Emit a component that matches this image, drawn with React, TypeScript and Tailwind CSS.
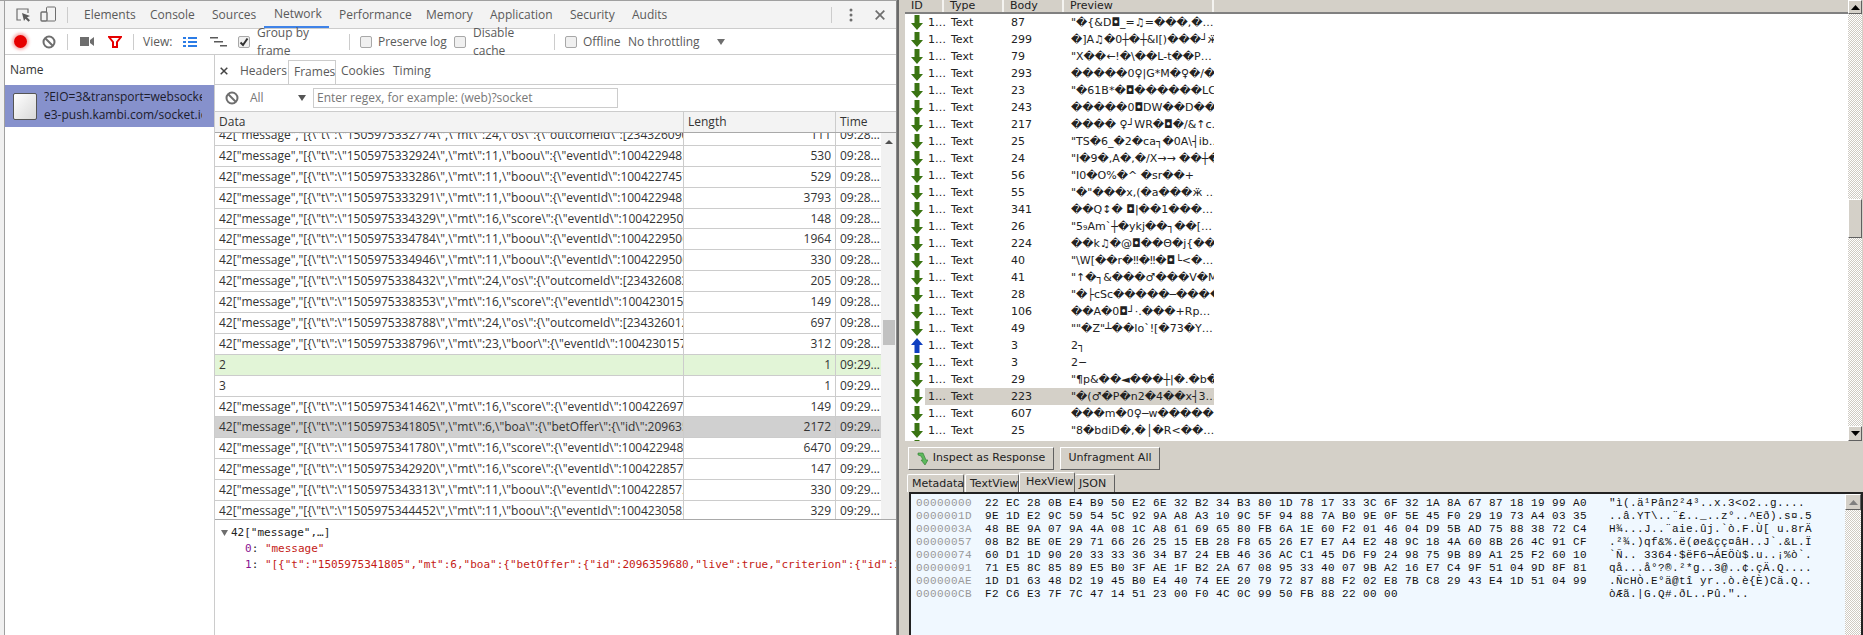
import React from "react";

const UI = "font-['Open_Sans','Noto_Sans',sans-serif]";
const WIN = "font-['DejaVu_Sans',sans-serif]";

const tabs = [
  { t: "Elements", c: "w-[66px]" },
  { t: "Console", c: "w-[62px]" },
  { t: "Sources", c: "w-[62px]" },
  { t: "Network", c: "w-[65px] border-b-2 border-[#3f83e8]" },
  { t: "Performance", c: "w-[87px]" },
  { t: "Memory", c: "w-[64px]" },
  { t: "Application", c: "w-[80px]" },
  { t: "Security", c: "w-[62px]" },
  { t: "Audits", c: "w-[50px]" },
];

const m = (ts: string, rest: string) => `42["message","[{\\"t\\":\\"15059753${ts}\\",\\"mt\\":${rest}`;
const boou = (id: string) => `11,\\"boou\\":{\\"eventId\\":${id},…`;
const score = (id: string) => `16,\\"score\\":{\\"eventId\\":${id},…`;
const os = (id: string) => `24,\\"os\\":{\\"outcomeId\\":[${id}…`;

const frames: { d: string; l: string; t: string; k?: "g" | "s" }[] = [
  { d: m("32774", os("234326090")), l: "111", t: "09:28…" },
  { d: m("32924", boou("1004229485")), l: "530", t: "09:28…" },
  { d: m("33286", boou("1004227457")), l: "529", t: "09:28…" },
  { d: m("33291", boou("1004229485")), l: "3793", t: "09:28…" },
  { d: m("34329", score("1004229506")), l: "148", t: "09:28…" },
  { d: m("34784", boou("1004229506")), l: "1964", t: "09:28…" },
  { d: m("34946", boou("1004229506")), l: "330", t: "09:28…" },
  { d: m("38432", os("234326083")), l: "205", t: "09:28…" },
  { d: m("38353", score("1004230157")), l: "149", t: "09:28…" },
  { d: m("38788", os("234326012")), l: "697", t: "09:28…" },
  { d: m("38796", `23,\\"boor\\":{\\"eventId\\":1004230157,\\…`), l: "312", t: "09:28…" },
  { d: "2", l: "1", t: "09:29…", k: "g" },
  { d: "3", l: "1", t: "09:29…" },
  { d: m("41462", score("1004226977")), l: "149", t: "09:29…" },
  { d: m("41805", `6,\\"boa\\":{\\"betOffer\\":{\\"id\\":209635…`), l: "2172", t: "09:29…", k: "s" },
  { d: m("41780", score("1004229485")), l: "6470", t: "09:29…" },
  { d: m("42920", score("1004228572")), l: "147", t: "09:29…" },
  { d: m("43313", boou("1004228572")), l: "330", t: "09:29…" },
  { d: m("44452", boou("1004230583")), l: "329", t: "09:29…" },
];

const list: [string, string, boolean?][] = [
  ["87", "\"�{&D◘_=♫=���,�…"],
  ["299", "�]A♫�0┼�┼&I[)���┘ӝ…"],
  ["79", "\"X��←!�\\��L-t��P…"],
  ["293", "�����0♀|G*M�♀�/�…"],
  ["23", "\"�61B*�◘������LC…"],
  ["243", "�����0◘DW��D���…"],
  ["217", "���� ♀┘WR�◘�/&↑c…"],
  ["25", "\"TS�6_�2�ca┐�0A\\┤ib…"],
  ["24", "\"I�9�,A�,�/X→→ ��┼�"],
  ["56", "\"I0�O%�^   �sr��+"],
  ["55", "\"�\"���x,(�a���ӝ …"],
  ["341", "��Q↕� ◘|��1���…"],
  ["26", "\"5₉Am`┼�ykj��┐��[…"],
  ["224", "��k♫�@◘��Θ�j{��┴…"],
  ["40", "\"\\W[��r�‼�‼�◘└<�…"],
  ["41", "\"↑�┐&���♂���V�M�‼…"],
  ["28", "\"�├cSc�����─����♫…"],
  ["106", "��A�0◘┘·.���+Rp…"],
  ["49", "\"\"�Z\"┴��Io`![�73�Y…"],
  ["3", "2┐", true],
  ["3", "2−"],
  ["29", "\"¶p&��◄���┼|�.�b�…"],
  ["223", "\"�(♂�P�n2�4��x┤3…"],
  ["607", "���m�0♀─w�����…"],
  ["25", "\"8�bdiD�,�│�R<��…"],
  ["31", ""],
];

const hex: [string, string, string][] = [
  ["00000000", "22 EC 28 0B E4 B9 50 E2 6E 32 B2 34 B3 80 1D 78 17 33 3C 6F 32 1A 8A 67 87 18 19 99 A0", "\"ì(.ä¹Pân2²4³..x.3<o2..g...."],
  ["0000001D", "9E 1D E2 9C 59 54 5C 92 9A A8 A3 10 9C 5F 94 88 7A B0 9E 0F 5E 45 F0 29 19 73 A4 03 35", "..â.YT\\..¨£.._..z°..^Eð).s¤.5"],
  ["0000003A", "48 BE 9A 07 9A 4A 08 1C A8 61 69 65 80 FB 6A 1E 60 F2 01 46 04 D9 5B AD 75 88 38 72 C4", "H¾...J..¨aie.ûj.`ò.F.Ù[ u.8rÄ"],
  ["00000057", "08 B2 BE 0E 29 71 66 26 25 15 EB 28 F8 65 26 E7 E7 A4 E2 48 9C 18 4A 60 8B 26 4C 91 CF", ".²¾.)qf&%.ë(øe&çç¤âH..J`.&L.Ï"],
  ["00000074", "60 D1 1D 90 20 33 33 36 34 B7 24 EB 46 36 AC C1 45 D6 F9 24 98 75 9B 89 A1 25 F2 60 10", "`Ñ.. 3364·$ëF6¬ÁEÖù$.u..¡%ò`."],
  ["00000091", "71 E5 8C 85 89 E5 B0 3F AE 1F B2 2A 67 08 95 33 40 07 9B A2 16 E7 C4 9F 51 04 9D 8F 81", "qå...å°?®.²*g..3@..¢.çÄ.Q...."],
  ["000000AE", "1D D1 63 48 D2 19 45 B0 E4 40 74 EE 20 79 72 87 88 F2 02 E8 7B C8 29 43 E4 1D 51 04 99", ".ÑcHÒ.E°ä@tî yr..ò.è{È)Cä.Q.."],
  ["000000CB", "F2 C6 E3 7F 7C 47 14 51 23 00 F0 4C 0C 99 50 FB 88 22 00 00", "òÆã.|G.Q#.ðL..Pû.\".."],
];

function Check({ on }: { on?: boolean }) {
  return (
    <span className="flex h-[12px] w-[12px] items-center justify-center rounded-[2px] border border-[#a8a8a8] bg-[#f0f0f0]">
      {on && (
        <svg width="10" height="10" viewBox="0 0 10 10">
          <path d="M1.5 5.5 4 8l4.5-6.5" fill="none" stroke="#333" strokeWidth="2" />
        </svg>
      )}
    </span>
  );
}

function Clear() {
  return (
    <svg width="14" height="14" viewBox="0 0 14 14">
      <circle cx="7" cy="7" r="5.5" fill="none" stroke="#6e6e6e" strokeWidth="2" />
      <path d="M3 3l8 8" stroke="#6e6e6e" strokeWidth="2" />
    </svg>
  );
}

function Arrow({ up }: { up?: boolean }) {
  return (
    <svg width="12" height="15" viewBox="0 0 12 15" className="shrink-0">
      {up ? (
        <path d="M6 0l6 7H8.5v8h-5V7H0z" fill="#0f3fc0" />
      ) : (
        <path d="M3.5 0h5v8H12l-6 7-6-7h3.5z" fill="#3a7412" />
      )}
    </svg>
  );
}

function Tri({ up }: { up?: boolean }) {
  return (
    <svg width="9" height="5" viewBox="0 0 9 5">
      <path d={up ? "M4.5 0 9 5H0z" : "M0 0h9L4.5 5z"} fill="#000" />
    </svg>
  );
}

function Bevel({ children, className }: { children?: React.ReactNode; className: string }) {
  return (
    <div className={`flex items-center justify-center border-t border-l border-t-white border-l-white border-r border-b border-r-[#606060] border-b-[#606060] bg-[#d4d0c8] ${className}`}>
      {children}
    </div>
  );
}

const checker = "bg-[repeating-conic-gradient(#cfcbc3_0_25%,#ffffff_0_50%)] bg-[length:2px_2px]";

function DevTools() {
  return (
    <div className={`flex h-full w-[892px] shrink-0 flex-col border-r border-[#8a8a8a] bg-white text-[12px] text-[#5a5a5a] ${UI}`}>
      <div className="flex h-[27px] shrink-0 items-center bg-[#f3f3f3]">
        <div className="flex w-[10px]" />
        <svg width="16" height="16" viewBox="0 0 16 16" className="shrink-0">
          <path d="M13 6V2H2v11h4" fill="none" stroke="#6e6e6e" strokeWidth="1.2" />
          <path d="M7 6l8 3-3 1.3 3 3-1.5 1.5-3-3L9 14z" fill="#5a5a5a" />
        </svg>
        <svg width="16" height="17" viewBox="0 0 16 17" className="ml-[9px] shrink-0">
          <rect x="6.5" y="1" width="9" height="14" rx="1" fill="none" stroke="#6e6e6e" />
          <rect x="1" y="6" width="6" height="9" rx="1" fill="#f3f3f3" stroke="#6e6e6e" strokeWidth="1.4" />
        </svg>
        <div className="ml-[11px] h-[16px] w-px bg-[#ccc]" />
        <div className="ml-[6px] flex h-full">
          {tabs.map((t) => (
            <div key={t.t} className={`flex h-full items-center justify-start pl-[10px] ${t.c}`}>{t.t}</div>
          ))}
        </div>
        <div className="ml-auto h-[16px] w-px bg-[#ccc]" />
        <svg width="4" height="14" viewBox="0 0 4 14" className="ml-[17px]">
          <circle cx="2" cy="2" r="1.5" fill="#6e6e6e" />
          <circle cx="2" cy="7" r="1.5" fill="#6e6e6e" />
          <circle cx="2" cy="12" r="1.5" fill="#6e6e6e" />
        </svg>
        <svg width="10" height="10" viewBox="0 0 10 10" className="ml-[22px] mr-[11px]">
          <path d="M.7.7l8.6 8.6M9.3.7.7 9.3" stroke="#6e6e6e" strokeWidth="1.7" />
        </svg>
      </div>
      <div className="flex h-[27px] shrink-0 items-center border-y border-[#ccc]">
        <div className="ml-[9px] h-[13px] w-[13px] rounded-full bg-[#e60000] shadow-[0_0_3px_2px_rgba(230,0,0,0.3)]" />
        <div className="ml-[15px]"><Clear /></div>
        <div className="ml-[11px] h-[16px] w-px bg-[#ccc]" />
        <svg width="14" height="9" viewBox="0 0 14 9" className="ml-[12px]">
          <path d="M0 0h9v9H0zM10 3l4-3v9l-4-3z" fill="#6e6e6e" />
        </svg>
        <svg width="14" height="12" viewBox="0 0 14 12" className="ml-[14px]">
          <path d="M1 1h12L9 6v5H5V6z" fill="none" stroke="#e60000" strokeWidth="2" />
        </svg>
        <div className="ml-[11px] h-[16px] w-px bg-[#ccc]" />
        <span className="ml-[9px] w-[40px]">View:</span>
        <svg width="14" height="10" viewBox="0 0 14 10">
          <path d="M0 0h3v2H0zM5 0h9v2H5zM0 4h3v2H0zM5 4h9v2H5zM0 8h3v2H0zM5 8h9v2H5z" fill="#2b7ce6" />
        </svg>
        <svg width="17" height="10" viewBox="0 0 17 10" className="ml-[13px]">
          <path d="M0 0h8v1.5H0zM4 4h9v1.5H4zM10 8h7v1.5h-7z" fill="#5a5a5a" />
        </svg>
        <span className="ml-[11px]"><Check on /></span>
        <span className="ml-[7px] w-[86px]">Group by frame</span>
        <div className="ml-[6px] h-[16px] w-px bg-[#ccc]" />
        <span className="ml-[10px]"><Check /></span>
        <span className="ml-[6px] w-[70px]">Preserve log</span>
        <span className="ml-[6px]"><Check /></span>
        <span className="ml-[7px] w-[74px]">Disable cache</span>
        <div className="ml-[7px] h-[16px] w-px bg-[#ccc]" />
        <span className="ml-[10px]"><Check /></span>
        <span className="ml-[6px] w-[45px]">Offline</span>
        <span className="w-[89px]">No throttling</span>
        <svg width="8" height="6" viewBox="0 0 8 6"><path d="M0 0h8L4 6z" fill="#6e6e6e" /></svg>
      </div>
      <div className="flex min-h-0 flex-1">
        <div className="flex w-[210px] shrink-0 flex-col border-r border-[#ccc]">
          <div className="flex h-[30px] shrink-0 items-center pl-[5px] text-[#333]">Name</div>
          <div className="flex h-[42px] shrink-0 items-center bg-[#8691cc] text-[#1c1c2c]">
            <div className="ml-[8px] h-[27px] w-[24px] shrink-0 rounded-[2px] border border-[#555] bg-gradient-to-br from-white to-[#d8d8d8]" />
            <div className="ml-[7px] w-[158px] overflow-hidden whitespace-nowrap leading-[18px]">
              <div>?EIO=3&amp;transport=websocket</div>
              <div>e3-push.kambi.com/socket.io</div>
            </div>
          </div>
        </div>
        <div className="flex min-w-0 flex-1 flex-col">
          <div className="flex h-[30px] shrink-0 items-end border-b border-[#ccc]">
            <svg width="8" height="8" viewBox="0 0 8 8" className="mb-[9px] ml-[5px]">
              <path d="M.7.7l6.6 6.6M7.3.7.7 7.3" stroke="#444" strokeWidth="1.5" />
            </svg>
            <span className="ml-[12px] w-[48px] pb-[4px]">Headers</span>
            <span className="h-[24px] w-[48px] border border-b-0 border-[#ccc] pl-[5px] pt-[2px]">Frames</span>
            <span className="ml-[5px] w-[52px] pb-[4px]">Cookies</span>
            <span className="pb-[4px]">Timing</span>
          </div>
          <div className="flex h-[27px] shrink-0 items-center border-b border-[#ccc]">
            <span className="ml-[10px]"><Clear /></span>
            <span className="ml-[11px] w-[48px] text-[#777]">All</span>
            <svg width="8" height="6" viewBox="0 0 8 6"><path d="M0 0h8L4 6z" fill="#555" /></svg>
            <div className="ml-[7px] flex h-[20px] w-[305px] items-center border border-[#ccc] pl-[3px] text-[#777]">
              Enter regex, for example: (web)?socket
            </div>
          </div>
          <div className="flex h-[21px] shrink-0 items-center border-b border-[#a9a9a9] bg-[#f3f3f3] text-[#333]">
            <div className="w-[469px] border-r border-[#ccc] pl-[4px] leading-[20px]">Data</div>
            <div className="w-[152px] border-r border-[#ccc] pl-[4px] leading-[20px]">Length</div>
            <div className="pl-[4px]">Time</div>
          </div>
          <div className="flex min-h-0 flex-1 overflow-hidden">
            <div className="w-[666px] shrink-0 overflow-hidden text-[#333]">
              <div className="-mt-[8px]">
                {frames.map((f, i) => (
                  <div
                    key={i}
                    className={`flex h-[20.9px] items-center border-b border-[#ccc] ${f.k === "g" ? "bg-[#e2f5d7]" : f.k === "s" ? "bg-[#d0d0d0]" : "bg-white"}`}
                  >
                    <div className="h-full w-[469px] overflow-hidden whitespace-nowrap border-r border-[#ccc] pl-[4px] leading-[20px]">{f.d}</div>
                    <div className="h-full w-[152px] border-r border-[#ccc] pr-[4px] text-right leading-[20px]">{f.l}</div>
                    <div className="h-full pl-[4px] leading-[20px]">{f.t}</div>
                  </div>
                ))}
              </div>
            </div>
            <div className="relative flex-1 bg-[#f1f1f1]">
              <svg width="8" height="4" viewBox="0 0 8 4" className="ml-[4px] mt-[7px]"><path d="M4 0l4 4H0z" fill="#505050" /></svg>
              <div className="absolute left-[2px] top-[187px] h-[25px] w-[12px] bg-[#c1c1c1]" />
            </div>
          </div>
          <div className="h-[116px] shrink-0 overflow-hidden whitespace-nowrap border-t border-[#a9a9a9] bg-white pt-[5px] font-['DejaVu_Sans_Mono',monospace] text-[11px] leading-[16px]">
            <div className="flex items-center pl-[6px] text-[#222]">
              <svg width="7" height="6" viewBox="0 0 7 6" className="mr-[3px]"><path d="M0 0h7L3.5 6z" fill="#6e6e6e" /></svg>
              42["message",…]
            </div>
            <div className="pl-[30px]"><span className="text-[#881391]">0</span><span className="text-[#222]">: </span><span className="text-[#c41a16]">"message"</span></div>
            <div className="pl-[30px]"><span className="text-[#881391]">1</span><span className="text-[#222]">: </span><span className="text-[#c41a16]">{`"[{"t":"1505975341805","mt":6,"boa":{"betOffer":{"id":2096359680,"live":true,"criterion":{"id":10`}</span></div>
          </div>
        </div>
      </div>
    </div>
  );
}

function Fiddler() {
  return (
    <div className={`flex min-w-0 flex-1 flex-col text-[11px] text-[#222] ${WIN}`}>
      <div className="flex h-[442px] shrink-0 border-b border-[#d4d0c8]">
        <div className="w-[943px] shrink-0 overflow-hidden bg-white">
          <div className="flex h-[14px] items-center border-b-2 border-[#808080] bg-[#d4d0c8] leading-[12px]">
            <div className="h-full w-[39px] border-r-2 border-[#f4f3f0] pl-[6px]">ID</div>
            <div className="h-full w-[60px] border-r-2 border-[#f4f3f0] pl-[6px]">Type</div>
            <div className="h-full w-[60px] border-r-2 border-[#f4f3f0] pl-[6px]">Body</div>
            <div className="h-full w-[150px] border-r-2 border-[#f4f3f0] pl-[6px]">Preview</div>
          </div>
          {list.map(([b, p, up], i) => (
            <div key={i} className="flex h-[17px] items-center pl-[6px] leading-[17px]">
              <Arrow up={up} />
              <div className={`ml-[2px] flex h-full w-[289px] whitespace-nowrap ${i === 22 ? "bg-[#d4d0c8]" : ""}`}>
                <span className="w-[26px] pl-[3px]">1…</span>
                <span className="w-[60px]">Text</span>
                <span className="w-[60px]">{b}</span>
                <span className="w-[143px] overflow-hidden">{p}</span>
              </div>
            </div>
          ))}
        </div>
        <div className={`flex w-[14px] shrink-0 flex-col justify-between ${checker}`}>
          <div className="flex flex-col">
            <Bevel className="h-[14px]"><Tri up /></Bevel>
            <div className="h-[185px]" />
            <Bevel className="h-[39px]" />
          </div>
          <Bevel className="h-[15px]"><Tri /></Bevel>
        </div>
        <div className="flex-1 bg-[#d4d0c8]" />
      </div>
      <div className="flex h-[30px] shrink-0 items-center bg-[#d4d0c8] pl-[3px] pt-[2px]">
        <Bevel className="h-[23px] w-[146px] gap-[5px]">
          <svg width="11" height="14" viewBox="0 0 11 14">
            <path d="M1 2h5l3 7h2l-3 5-4-5h2L4 5 1 4z" fill="#5cb85c" stroke="#2f7a2f" strokeWidth=".6" />
          </svg>
          <span>Inspect as Response</span>
        </Bevel>
        <Bevel className="ml-[6px] h-[23px] w-[100px]">Unfragment All</Bevel>
      </div>
      <div className="flex h-[20px] shrink-0 items-end bg-[#d4d0c8] pl-[2px]">
        <div className="h-[18px] w-[57px] rounded-t-[2px] border-t border-l border-r border-t-white border-l-white border-r-[#606060] pl-[4px] leading-[17px]">Metadata</div>
        <div className="ml-[1px] h-[18px] w-[54px] rounded-t-[2px] border-t border-l border-r border-t-white border-l-white border-r-[#606060] pl-[4px] leading-[17px]">TextView</div>
        <div className="h-[20px] w-[56px] rounded-t-[2px] border-t border-l border-r border-t-white border-l-white border-r-[#606060] pl-[6px] leading-[18px]">HexView</div>
        <div className="h-[18px] w-[40px] rounded-t-[2px] border-t border-r border-t-white border-r-[#606060] pl-[4px] leading-[17px]">JSON</div>
      </div>
      <div className="ml-[4px] flex min-h-0 flex-1 border-l-2 border-t-2 border-r-2 border-[#222] bg-[#f0f8ff]">
        <div className="flex-1 overflow-hidden whitespace-pre pl-[5px] pt-[3px] font-['Liberation_Mono',monospace] text-[11px] leading-[13px] tracking-[0.4px] text-[#111]">
          {hex.map(([o, h, a]) => (
            <div key={o} className="flex">
              <span className="w-[69px] shrink-0 text-[#999]">{o}</span>
              <span className="w-[624px] shrink-0">{h}</span>
              <span>{a}</span>
            </div>
          ))}
        </div>
        <div className={`w-[16px] shrink-0 ${checker}`}>
          <Bevel className="h-[16px]">
            <svg width="9" height="5" viewBox="0 0 9 5"><path d="M4.5 0 9 5H0z" fill="#808080" /></svg>
          </Bevel>
        </div>
      </div>
    </div>
  );
}

export default function App() {
  return (
    <div className="flex h-[635px] w-[1863px] overflow-hidden bg-[#d4d0c8]">
      <div className="flex h-full w-[5px] shrink-0 flex-col border-t border-[#a0a0a0] bg-[#f0f0f0]">
        <div className="h-full border-r border-[#a0a0a0]" />
      </div>
      <div className="h-full shrink-0 border-t border-[#a0a0a0]">
        <DevTools />
      </div>
      <div className="h-full w-[8px] shrink-0 border-l-2 border-[#6a6a6a] bg-[#d4d0c8]" />
      <Fiddler />
    </div>
  );
}
